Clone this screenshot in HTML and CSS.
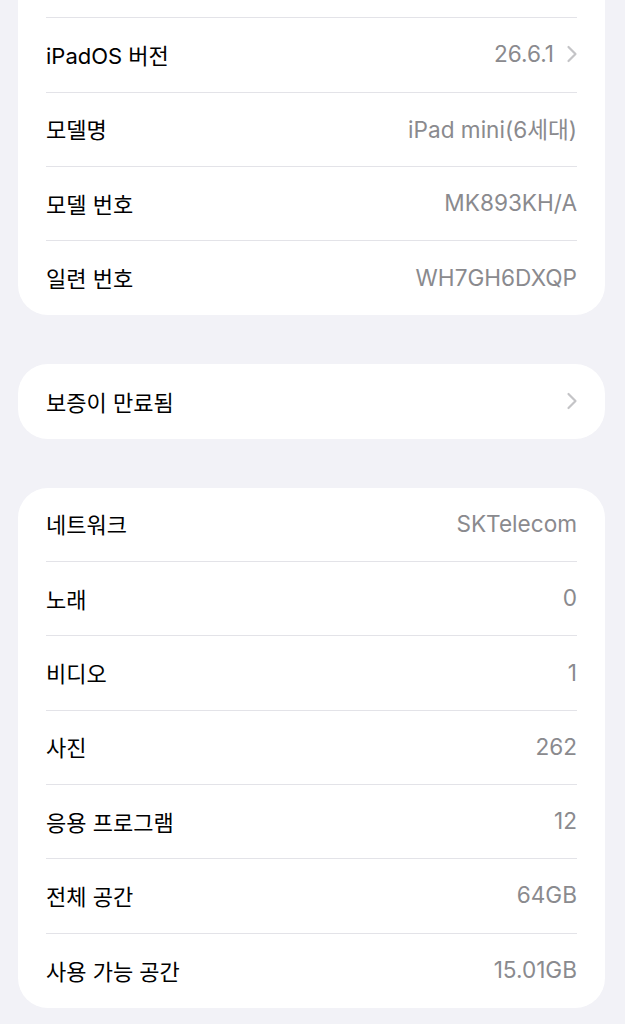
FILE: index.html
```html
<!DOCTYPE html>
<html lang="ko">
<head>
  <meta charset="UTF-8">
  <title>정보</title>
  <link rel="stylesheet" href="styles.css">
</head>
<body>
  <div class="page">

    <div class="group first">
      <div class="row"></div>
      <div class="row">
        <span class="label">iPadOS 버전</span>
        <span class="value">26.6.1</span>
        <svg class="chevron" viewBox="0 0 12 18"><path d="M2.5 2 L9.5 9 L2.5 16"/></svg>
      </div>
      <div class="row">
        <span class="label">모델명</span>
        <span class="value">iPad mini(6세대)</span>
      </div>
      <div class="row">
        <span class="label">모델 번호</span>
        <span class="value">MK893KH/A</span>
      </div>
      <div class="row">
        <span class="label">일련 번호</span>
        <span class="value">WH7GH6DXQP</span>
      </div>
    </div>

    <div class="group">
      <div class="row">
        <span class="label">보증이 만료됨</span>
        <svg class="chevron" viewBox="0 0 12 18"><path d="M2.5 2 L9.5 9 L2.5 16"/></svg>
      </div>
    </div>

    <div class="group">
      <div class="row">
        <span class="label">네트워크</span>
        <span class="value">SKTelecom</span>
      </div>
      <div class="row">
        <span class="label">노래</span>
        <span class="value">0</span>
      </div>
      <div class="row">
        <span class="label">비디오</span>
        <span class="value">1</span>
      </div>
      <div class="row">
        <span class="label">사진</span>
        <span class="value">262</span>
      </div>
      <div class="row">
        <span class="label">응용 프로그램</span>
        <span class="value">12</span>
      </div>
      <div class="row">
        <span class="label">전체 공간</span>
        <span class="value">64GB</span>
      </div>
      <div class="row">
        <span class="label">사용 가능 공간</span>
        <span class="value">15.01GB</span>
      </div>
    </div>

  </div>
</body>
</html>
```

FILE: styles.css
```css
body {
  margin: 0;
  padding: 0;
  background-color: #f2f2f7;
  font-family: Inter, "Noto Sans CJK KR", sans-serif;
  color: #000;
  overflow: hidden;
}

.page {
  padding: 0 20px 0 18px;
  display: flex;
  flex-direction: column;
  gap: 49px;
}

.group {
  background-color: #fff;
  border-radius: 30px;
  padding: 0 28px;
}

.group.first {
  margin-top: -56px;
  border-radius: 0 0 30px 30px;
}

.row {
  height: 74.3px;
  box-sizing: border-box;
  padding-bottom: 2px;
  display: flex;
  align-items: center;
  gap: 12px;
  border-bottom: 1px solid #e3e3e8;
  font-size: 22px;
}

.row:last-child {
  border-bottom: none;
}

.label {
  flex: 1;
}

.value {
  color: #8a8a8e;
  font-size: 22.6px;
}

.chevron {
  width: 12px;
  height: 18px;
  margin-right: -1px;
  fill: none;
  stroke: #c4c4c7;
  stroke-width: 2.2;
  stroke-linecap: round;
  stroke-linejoin: round;
}
```
